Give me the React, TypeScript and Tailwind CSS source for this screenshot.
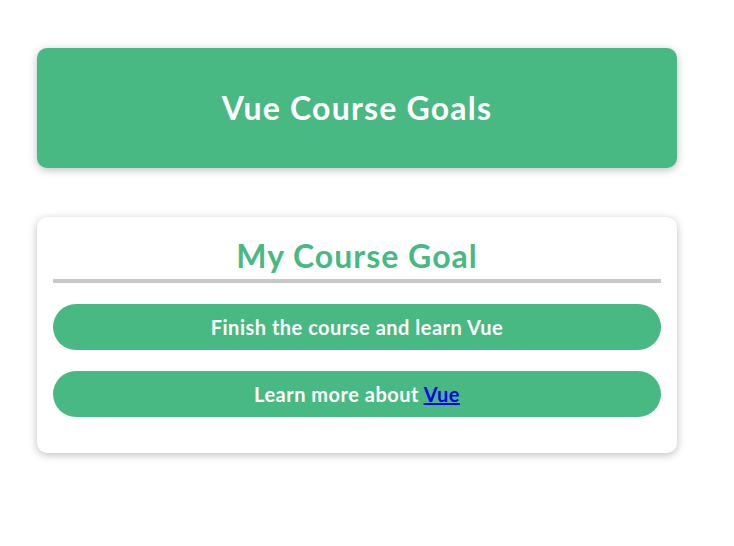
export default function App() {
  const goals = ["Finish the course and learn Vue"];

  return (
    <div className="min-h-[546px] bg-white font-['Lato','Noto_Sans',sans-serif] pt-12">
      <header className="ml-[37px] w-[640px] h-[120px] rounded-[10px] bg-[#48b983] shadow-[0_2px_8px_rgba(0,0,0,0.26)] flex items-center justify-center">
        <h1 className="text-[32px] font-bold text-white tracking-[1.2px]">Vue Course Goals</h1>
      </header>

      <section className="ml-[37px] mt-[49px] w-[640px] rounded-[10px] bg-white shadow-[0_2px_8px_rgba(0,0,0,0.26)] px-4 pt-[17px] pb-[36px]">
        <h2 className="text-center text-[32px] leading-[44px] font-bold text-[#48b983] tracking-[1px] border-b-4 border-[#c8c8c8] pb-[1px]">
          My Course Goal
        </h2>
        <ul className="mt-[21px] flex flex-col gap-[21px]">
          {goals.map((g) => (
            <li
              key={g}
              className="h-[46px] rounded-full bg-[#48b983] flex items-center justify-center text-white text-[20px] font-bold tracking-[0.5px]"
            >
              {g}
            </li>
          ))}
          <li className="h-[46px] rounded-full bg-[#48b983] flex items-center justify-center text-white text-[20px] font-bold tracking-[0.5px]">
            <span className="whitespace-pre">
              Learn more about <a href="#" className="text-[#0000ee] underline">Vue</a>
            </span>
          </li>
        </ul>
      </section>
    </div>
  );
}
